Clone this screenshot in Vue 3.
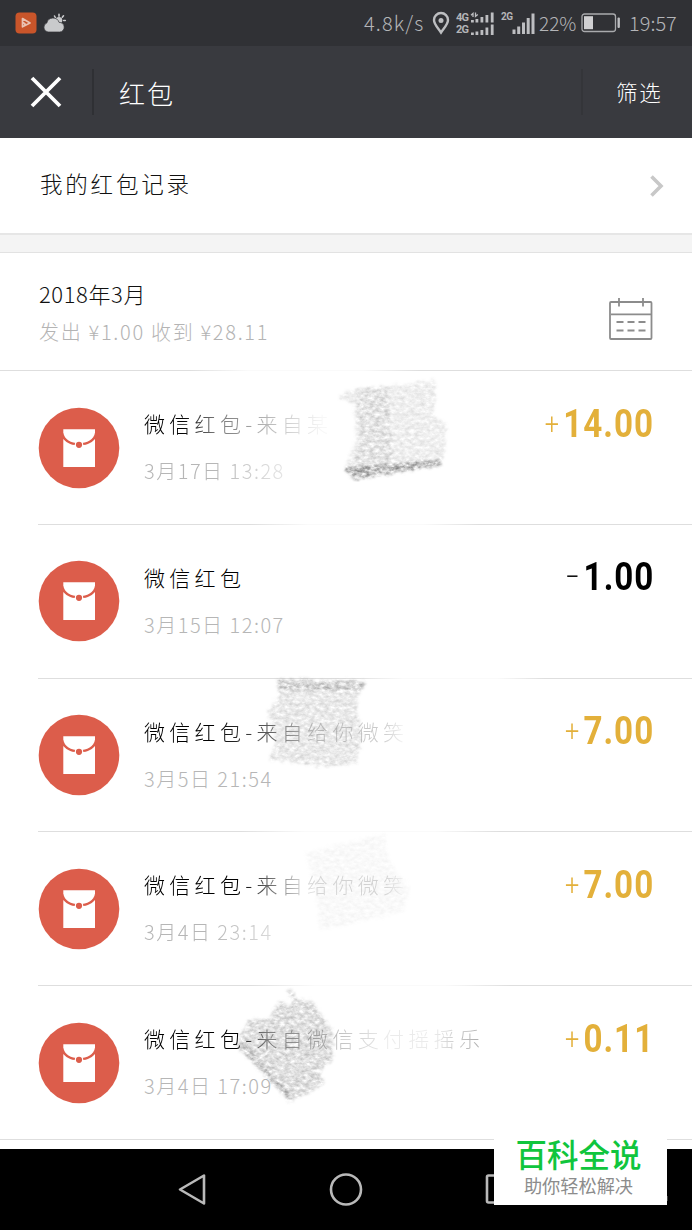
<script setup>
import { ref } from 'vue';

// fade: class of the mask that wears the sender name away
const records = ref([
  { id: 1, name: '微信红包-来自某', time: '3月17日 13:28', sign: '+', amount: '14.00', fade: 'fade-a' },
  { id: 2, name: '微信红包', time: '3月15日 12:07', sign: '−', amount: '1.00', fade: '' },
  { id: 3, name: '微信红包-来自给你微笑', time: '3月5日 21:54', sign: '+', amount: '7.00', fade: 'fade-b' },
  { id: 4, name: '微信红包-来自给你微笑', time: '3月4日 23:14', sign: '+', amount: '7.00', fade: 'fade-c' },
  { id: 5, name: '微信红包-来自微信支付摇摇乐', time: '3月4日 17:09', sign: '+', amount: '0.11', fade: 'fade-d' },
]);
</script>

<template>
  <div class="phone">
    <div class="status">
      <svg class="status-left" width="54" height="24" viewBox="0 0 54 24">
        <rect x="0.5" y="1.5" width="21" height="21" rx="4" fill="#c9552a" />
        <path d="M7.5 7.5 L15 12 L7.5 15.8 Z M7.5 11 L10.5 13.5" fill="none" stroke="#e9c3b2" stroke-width="1.7" stroke-linejoin="round" />
        <g fill="none" stroke="#c9cacc" stroke-width="1.6" stroke-linecap="round">
          <path d="M39.5 5 L40.5 7 M44 3.2 V5.2 M48.5 4.8 L47.3 6.2 M48.7 9.5 H50.3 M47 13 L48 14" />
        </g>
        <circle cx="44" cy="9.3" r="3.3" fill="#c9cacc" />
        <path d="M33 21 a4.7 4.7 0 0 1 -1.2 -9 a6.4 6.4 0 0 1 12.3 -0.6 a4.8 4.8 0 0 1 0.6 9.6 Z" fill="#c9cacc" stroke="#303135" stroke-width="0.7" />
      </svg>
      <div class="status-right">
        <span class="speed">4.8k/s</span>
        <svg class="pin" width="18" height="24" viewBox="0 0 18 24">
          <path d="M9 21.5 C6.5 17.5 2 13.5 2 9 A7 7 0 0 1 16 9 C16 13.5 11.5 17.5 9 21.5 Z" fill="none" stroke="#bdbec1" stroke-width="2.4" />
          <circle cx="9" cy="9.5" r="2.5" fill="#bdbec1" />
        </svg>
        <div class="sim">
          <div class="sim-line">
            <span>4G</span>
            <svg width="24" height="11" viewBox="0 0 24 11" fill="#bdbec1">
              <path d="M3 5 V1.4 L1 3.2 M5.5 0.5 V4.3 L7.8 2.5" fill="none" stroke="#bdbec1" stroke-width="1.3" />
              <rect x="1" y="8" width="2.8" height="2.5" /><rect x="5.5" y="7" width="2.8" height="3.5" />
              <rect x="10.5" y="5" width="2.8" height="5.5" /><rect x="15.5" y="3" width="2.8" height="7.5" />
              <rect x="20.8" y="0.5" width="2.8" height="10" />
            </svg>
          </div>
          <div class="sim-line">
            <span>2G</span>
            <svg width="24" height="11" viewBox="0 0 24 11" fill="#bdbec1">
              <rect x="1" y="8.5" width="2.8" height="2.5" /><rect x="5.5" y="7.5" width="2.8" height="3.5" />
              <rect x="10.5" y="6" width="2.8" height="5" /><rect x="15.5" y="3.5" width="2.8" height="7.5" />
              <rect x="20.8" y="0.5" width="2.8" height="10.5" />
            </svg>
          </div>
        </div>
        <span class="sim-two">2G</span>
        <svg class="bars" width="23" height="23" viewBox="0 0 23 23" fill="#bdbec1">
          <rect x="0.5" y="17.5" width="3" height="4.5" /><rect x="5.2" y="14.5" width="3" height="7.5" />
          <rect x="10" y="10.5" width="3" height="11.5" /><rect x="14.7" y="6" width="3" height="16" />
          <rect x="19.5" y="1.5" width="3" height="20.5" />
        </svg>
        <span class="percent">22%</span>
        <svg class="battery" width="40" height="20" viewBox="0 0 40 20">
          <rect x="1" y="1" width="33.5" height="17.5" rx="2.5" fill="none" stroke="#a9aaad" stroke-width="1.3" />
          <rect x="3" y="3.2" width="9" height="13" fill="#d0d0d2" />
          <rect x="36.5" y="4.5" width="2.4" height="10.5" rx="1" fill="#bdbec1" />
        </svg>
        <span class="clock">19:57</span>
      </div>
    </div>

    <header class="bar">
      <div class="close">
        <svg width="32" height="32" viewBox="0 0 32 32">
          <path d="M2 2 L30 30 M30 2 L2 30" stroke="#fff" stroke-width="3.8" />
        </svg>
      </div>
      <h1>红包</h1>
      <div class="filter">筛选</div>
    </header>

    <div class="mine">
      <span>我的红包记录</span>
      <svg width="16" height="24" viewBox="0 0 16 24">
        <path d="M2.5 2.5 L12 12 L2.5 21.5" fill="none" stroke="#c8c8c8" stroke-width="3.6" />
      </svg>
    </div>
    <div class="gap"></div>

    <div class="month">
      <div>
        <div class="month-name">2018年3月</div>
        <div class="month-sum">发出 ¥1.00 收到 ¥28.11</div>
      </div>
      <svg width="44" height="44" viewBox="0 0 44 44" fill="none" stroke="#8c8c8c" stroke-width="1.8">
        <rect x="1" y="5" width="41.5" height="37" rx="1" />
        <path d="M2 17.3 H42 M10 1 V9.5 M34 1 V9.5" />
        <path d="M7.5 25 H14.5 M18.5 25 H25.5 M29.5 25 H36.5 M7.5 33.5 H14.5 M18.5 33.5 H25.5 M29.5 33.5 H36.5" />
      </svg>
    </div>

    <div class="list">
      <div v-for="item in records" :key="item.id" class="record">
        <svg class="packet" width="82" height="82" viewBox="0 0 82 82">
          <circle cx="41" cy="41" r="40.3" fill="#dc5d4b" />
          <path d="M25.3 22.3 H57 V25.5 C56 32.5 49 36.3 41 36.3 C33 36.3 26.3 32.5 25.3 25.5 Z" fill="#fff" />
          <path d="M25.3 32 C29 36.5 35 38.5 41 38.5 C47 38.5 53.3 36.5 57 32 V60 H25.3 Z" fill="#fff" />
          <circle cx="41" cy="37.8" r="4.3" fill="#fff" />
          <circle cx="41" cy="37.8" r="3.1" fill="#dc5d4b" />
        </svg>
        <div class="info">
          <div class="name" :class="item.fade">{{ item.name }}</div>
          <div class="time" :class="item.fade && item.fade + '-time'">{{ item.time }}</div>
        </div>
        <div class="money" :class="{ out: item.sign === '−' }">
          <span class="sign">{{ item.sign }}</span><span class="amount">{{ item.amount }}</span>
        </div>
      </div>

      <!-- pencil scribbles over the sender names -->
      <svg class="scribbles" width="692" height="778" viewBox="0 371 692 778">
        <defs>
          <filter id="pencil" x="-10%" y="-10%" width="120%" height="120%">
            <feTurbulence type="fractalNoise" baseFrequency="0.2 0.3" numOctaves="3" seed="7" result="noise" />
            <feColorMatrix in="noise" type="matrix" values="0 0 0 0 0  0 0 0 0 0  0 0 0 0 0  1.5 0 0 0 -0.28" result="grain" />
            <feDisplacementMap in="SourceGraphic" in2="noise" scale="8" xChannelSelector="G" yChannelSelector="B" result="rough" />
            <feGaussianBlur in="rough" stdDeviation="1.2" result="soft" />
            <feComposite in="soft" in2="grain" operator="in" result="drawn" />
            <feGaussianBlur in="drawn" stdDeviation="0.5" />
          </filter>
          <linearGradient id="erase">
            <stop offset="0" stop-color="#fff" stop-opacity="0" />
            <stop offset="0.25" stop-color="#fff" stop-opacity="0.85" />
            <stop offset="0.75" stop-color="#fff" stop-opacity="0.85" />
            <stop offset="1" stop-color="#fff" stop-opacity="0" />
          </linearGradient>
        </defs>
        <g fill="url(#erase)">
          <rect x="190" y="369" width="230" height="3" />
          <rect x="250" y="522" width="230" height="4" />
          <rect x="355" y="676" width="190" height="4" />
          <rect x="240" y="830" width="260" height="4" />
          <rect x="250" y="984" width="260" height="4" />
        </g>
        <g filter="url(#pencil)">
          <path d="M338 398 L345 391 L436 380 L434 416 L446 424 L446 443 L441 465 L352 476 L345 466 L356 440 L354 405 Z" fill="#a8a8a8" fill-opacity="0.38" />
          <path d="M356 388 L388 386 L393 464 L352 474 L360 440 Z" fill="#999" fill-opacity="0.32" />
        </g>
        <g filter="url(#pencil)">
          <path d="M343 468 L441 460 L441 465 L354 480 Z" fill="#777" fill-opacity="0.85" />
        </g>
        <g filter="url(#pencil)">
          <path d="M277 680 L365 682 L356 700 L362 735 L356 763 L330 767 L268 760 L276 742 L268 712 L279 695 Z" fill="#999" fill-opacity="0.43" />
          <path d="M276 679 L366 681 L363 691 L277 690 Z" fill="#777" fill-opacity="0.45" />
        </g>
        <g filter="url(#pencil)">
          <path d="M304 853 L385 834 L388 860 L410 890 L403 912 L320 930 L314 880 Z" fill="#b5b5b5" fill-opacity="0.16" />
        </g>
        <g filter="url(#pencil)">
          <path d="M286 990 L292 989 L298 1000 L312 1001 L334 1032 L332 1062 L318 1070 L325 1082 L312 1092 L290 1102 L236 1046 L248 1020 L271 1018 L277 1003 L294 1004 Z" fill="#808080" fill-opacity="0.5" />
          <path d="M236 1044 L244 1042 L290 1094 L290 1102 Z" fill="#777" fill-opacity="0.45" />
        </g>
      </svg>
    </div>

    <nav class="nav">
      <svg width="692" height="80" viewBox="0 0 692 80" fill="none" stroke="#b9b9b9" stroke-width="2.6" stroke-linejoin="round">
        <path d="M180 40.5 L204 26.5 V54.5 Z" />
        <circle cx="346" cy="40.5" r="15" />
        <rect x="487" y="26.5" width="27" height="27" rx="1.5" />
        <path d="M666.5 47 V52" stroke="#555" />
      </svg>
    </nav>

    <div class="mark">
      <div class="mark-name">百科全说</div>
      <div class="mark-text">助你轻松解决</div>
    </div>
  </div>
</template>

<style>
body {
  margin: 0;
  background: #fff;
}
</style>

<style scoped>
.phone {
  position: relative;
  width: 692px;
  height: 1230px;
  overflow: hidden;
  display: flex;
  flex-direction: column;
  background: #fff;
  font-family: "Noto Sans CJK SC", "Liberation Sans", sans-serif;
  font-weight: 300;
  color: #111;
  white-space: nowrap;
}

.status {
  flex: none;
  height: 46px;
  display: flex;
  justify-content: space-between;
  align-items: center;
  padding: 0 14px 0 15px;
  box-sizing: border-box;
  background: #303135;
  color: #b4b5b8;
}
.status-right {
  display: flex;
  align-items: center;
  font-size: 20px;
  line-height: 46px;
}
.speed {
  width: 68px;
  letter-spacing: 1.1px;
}
.pin {
  margin-right: 6px;
}
.sim {
  width: 39px;
  margin-right: 6px;
}
.sim-line {
  display: flex;
  align-items: flex-end;
  gap: 1px;
  height: 11.5px;
  font: bold 11px/11px "Roboto", sans-serif;
}
.sim-line span {
  width: 13px;
  letter-spacing: -0.8px;
}
.sim-two {
  width: 11px;
  margin-bottom: 12px;
  font: bold 10px/12px "Roboto", sans-serif;
  letter-spacing: -0.5px;
}
.percent {
  width: 42px;
  margin-left: 4px;
  font-size: 19px;
}
.battery {
  margin-right: 8px;
}
.clock {
  width: 49px;
}

.bar {
  flex: none;
  height: 92px;
  display: flex;
  align-items: center;
  background: #393a3f;
  color: #fff;
}
.close {
  width: 62px;
  height: 46px;
  padding-left: 30px;
  display: flex;
  align-items: center;
  border-right: 2px solid #2f3034;
}
h1 {
  flex: 1;
  margin: 0 0 0 25px;
  font-size: 26px;
  font-weight: 300;
  letter-spacing: 2px;
}
.filter {
  width: 76px;
  padding-left: 33px;
  border-left: 2px solid #343539;
  font-size: 21.5px;
  line-height: 46px;
  letter-spacing: 1.8px;
}

.mine {
  flex: none;
  height: 96px;
  box-sizing: border-box;
  padding: 0 27px 4px 40px;
  display: flex;
  justify-content: space-between;
  align-items: center;
  font-size: 22.5px;
  letter-spacing: 2.8px;
}
.mine span {
  margin-top: -2px;
}
.mine svg {
  margin-top: 4px;
}
.gap {
  flex: none;
  height: 20px;
  box-sizing: border-box;
  background: #f4f4f4;
  border-top: 2px solid #e6e6e6;
  border-bottom: 1px solid #e2e2e2;
  margin-top: -1px;
  margin-bottom: 1px;
}

.month {
  flex: none;
  height: 117px;
  box-sizing: border-box;
  padding: 2px 39px 0 39px;
  display: flex;
  justify-content: space-between;
  align-items: center;
  border-bottom: 1px solid #dedede;
}
.month svg {
  margin-top: 11px;
}
.month-name {
  font-size: 22px;
  line-height: 38px;
  letter-spacing: 0.6px;
}
.month-sum {
  font-size: 20px;
  line-height: 40px;
  letter-spacing: 1.7px;
  color: #b4b4b4;
}

.list {
  position: relative;
  flex: 1;
  min-height: 0;
}
.record {
  position: relative;
  height: 153.75px;
  box-sizing: border-box;
  margin-left: 38px;
  padding-right: 38px;
  display: flex;
  align-items: flex-start;
  border-bottom: 1px solid #dedede;
}
.record:nth-child(5) {
  margin-left: 0;
  padding-left: 38px;
}
.packet {
  margin-top: 35.5px;
  flex: none;
}
.info {
  flex: 1;
  padding: 28px 0 0 24px;
}
.name {
  width: fit-content;
  font-size: 21px;
  line-height: 48px;
  letter-spacing: 4.3px;
  color: #000;
}
.time {
  width: fit-content;
  font-size: 20px;
  line-height: 48px;
  letter-spacing: 1.5px;
  color: #b6b6b6;
}
.fade-a {
  mask-image: linear-gradient(90deg, #000 38px, rgba(0, 0, 0, 0.55) 70px, rgba(0, 0, 0, 0.25) 130px, rgba(0, 0, 0, 0.03) 178px);
}
.fade-a-time {
  mask-image: linear-gradient(90deg, #000 70px, rgba(0, 0, 0, 0.35) 140px);
}
.fade-b {
  mask-image: linear-gradient(90deg, #000 70px, rgba(0, 0, 0, 0.6) 130px, rgba(0, 0, 0, 0.25) 170px, rgba(0, 0, 0, 0.2) 240px, transparent 265px);
}
.fade-c {
  mask-image: linear-gradient(90deg, #000 95px, rgba(0, 0, 0, 0.6) 125px, rgba(0, 0, 0, 0.15) 160px, rgba(0, 0, 0, 0.17) 240px, transparent 265px);
}
.fade-c-time {
  mask-image: linear-gradient(90deg, #000 60px, rgba(0, 0, 0, 0.5) 130px);
}
.fade-d {
  mask-image: linear-gradient(90deg, #000 95px, rgba(0, 0, 0, 0.5) 125px, rgba(0, 0, 0, 0.3) 180px, rgba(0, 0, 0, 0.08) 240px, rgba(0, 0, 0, 0.08) 290px, rgba(0, 0, 0, 0.3) 330px);
}

/* squeezed to get the narrow numerals */
.money {
  display: flex;
  align-items: center;
  height: 105px;
  color: #e3b03a;
  transform: scaleX(0.84);
  transform-origin: right center;
}
.money.out {
  color: #000;
}
.sign {
  margin-right: 5px;
  font: 300 30px/32px "Roboto", sans-serif;
}
.amount {
  font: 700 39.5px/44px "Roboto", sans-serif;
  letter-spacing: 1.2px;
}
.scribbles {
  position: absolute;
  left: 0;
  top: 0;
  overflow: visible;
  pointer-events: none;
}

.nav {
  position: relative;
  flex: none;
  height: 81px;
  background: #000;
}

.mark {
  position: absolute;
  left: 494px;
  top: 1134px;
  width: 173px;
  height: 71px;
  box-sizing: border-box;
  padding: 2px 4px 0 0;
  background: #fff;
  text-align: center;
  font-family: "Liberation Sans", "Noto Sans CJK SC", sans-serif;
}
.mark-name {
  font-size: 31.5px;
  line-height: 40px;
  font-weight: 500;
  color: #10c53d;
}
.mark-text {
  font-size: 18.2px;
  line-height: 22px;
  font-weight: 400;
  color: #8c8c8c;
}
</style>
